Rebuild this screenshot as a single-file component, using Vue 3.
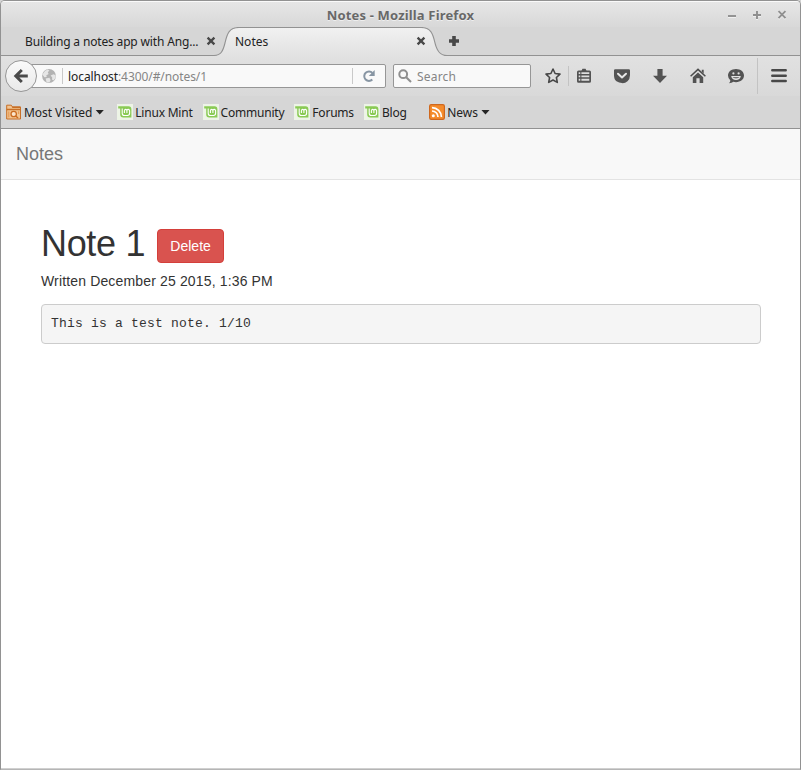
<script setup>
const bookmarks = [
  { label: 'Most Visited', icon: 'folder', menu: true },
  { label: 'Linux Mint', icon: 'mint' },
  { label: 'Community', icon: 'mint' },
  { label: 'Forums', icon: 'mint' },
  { label: 'Blog', icon: 'mint' },
  { label: 'News', icon: 'rss', menu: true },
]
</script>

<template>
  <div class="window">
    <header class="chrome">
      <div class="titlebar">
        <span class="title">Notes - Mozilla Firefox</span>
        <div class="controls">
          <svg viewBox="0 0 10 10"><path d="M1 6H9" /></svg>
          <svg viewBox="0 0 10 10"><path d="M1 5H9M5 1V9" /></svg>
          <svg viewBox="0 0 10 10"><path d="M1.5 1.2L8.5 8.2M8.5 1.2L1.5 8.2" /></svg>
        </div>
      </div>

      <div class="tabs">
        <div class="tab idle">
          <span class="tab-label">Building a notes app with Ang...</span>
          <svg class="close" viewBox="0 0 10 10"><path d="M1.6 1.6L8.4 8.4M8.4 1.6L1.6 8.4" /></svg>
        </div>
        <div class="tab active">
          <svg class="tab-shape" viewBox="0 0 238 30">
            <defs>
              <linearGradient id="tabfill" x1="0" y1="0" x2="0" y2="1">
                <stop offset="0" stop-color="#f1f1f1" />
                <stop offset="1" stop-color="#e1e1e1" />
              </linearGradient>
            </defs>
            <path d="M0 28.5H3C10 28.5 12 24 14 16C16 7 18 .5 28 .5H210C220 .5 222 7 224 16C226 24 229 28.5 236 28.5H238V30H0Z" fill="url(#tabfill)" />
            <path d="M0 28.5H3C10 28.5 12 24 14 16C16 7 18 .5 28 .5H210C220 .5 222 7 224 16C226 24 229 28.5 236 28.5H238" fill="none" stroke="#929292" stroke-width="1.1" />
          </svg>
          <span class="tab-label">Notes</span>
          <svg class="close" viewBox="0 0 10 10"><path d="M1.6 1.6L8.4 8.4M8.4 1.6L1.6 8.4" /></svg>
        </div>
        <svg class="plus" viewBox="0 0 12 12"><path d="M4.2 1H7.8V4.2H11V7.8H7.8V11H4.2V7.8H1V4.2H4.2Z" /></svg>
      </div>

      <div class="navbar-row">
        <div class="back">
          <svg viewBox="0 0 16 16"><path d="M8.8 2L2.8 8L8.8 14M3.6 8H14.8" fill="none" stroke="#4a4a4a" stroke-width="3" /></svg>
        </div>
        <div class="url">
          <svg class="globe" viewBox="0 0 16 16">
            <circle cx="8" cy="8" r="6.9" fill="#b3b3b3" />
            <path d="M1.4 6.4L4 3L6.6 1.6L8.4 2.4L6.8 4.2L7.6 6L5.2 7.6L5.8 9L3.4 9.2ZM9.6 7.6L12.6 6.2L14.8 7.4L14.4 10L12.4 12.6L11 11.4L11.2 9.4ZM4.6 10.6L8.4 9.8L9.6 12L8.4 14.6L5.6 14.2Z" fill="#e6e6e6" />
          </svg>
          <i class="sep"></i>
          <span class="address"><b>localhost</b>:4300/#/notes/1</span>
          <i class="sep"></i>
          <svg class="reload" viewBox="0 0 14 14">
            <path d="M10.3 10.5A4.7 4.7 0 1 1 10.4 4" fill="none" stroke="#8795a3" stroke-width="2" />
            <path d="M12.7 1V7H6.8Z" fill="#8795a3" />
          </svg>
        </div>
        <div class="search">
          <svg viewBox="0 0 14 14"><circle cx="5.2" cy="5.2" r="3.9" /><path d="M8.2 8.2L13 13" /></svg>
          <span>Search</span>
        </div>
        <div class="tools">
          <svg viewBox="0 0 18 18"><path d="M9 2L11.1 6.5L16 7.1L12.4 10.5L13.3 15.4L9 13L4.7 15.4L5.6 10.5L2 7.1L6.9 6.5Z" fill="none" stroke="#484848" stroke-width="1.6" stroke-linejoin="round" /></svg>
          <i class="divider short"></i>
          <svg viewBox="0 0 18 18">
            <path fill-rule="evenodd" d="M3.5 3.5H6.5L7.5 1.8H10.5L11.5 3.5H14.5Q16 3.5 16 5V14.2Q16 15.7 14.5 15.7H3.5Q2 15.7 2 14.2V5Q2 3.5 3.5 3.5ZM3.7 5.3V7.1H5.3V5.3ZM6.4 5.3V7.1H14.3V5.3ZM3.7 8.5V10.3H5.3V8.5ZM6.4 8.5V10.3H14.3V8.5ZM3.7 11.8V13.8H5.3V11.8ZM6.4 11.8V13.8H14.3V11.8Z" />
          </svg>
          <svg viewBox="0 0 18 18">
            <path d="M2.2 2.3H15.8Q17 2.3 17 3.5V8.2Q17 12 14.5 14.2T9 16.1T3.5 14.2T1 8.2V3.5Q1 2.3 2.2 2.3Z" />
            <path d="M5 6.8L9 10.5L13 6.8" fill="none" stroke="#e7e7e7" stroke-width="2" stroke-linecap="round" stroke-linejoin="round" />
          </svg>
          <svg viewBox="0 0 18 18"><path d="M6.4 2H11.6V8.7H16L9 16L2 8.7H6.4Z" /></svg>
          <svg viewBox="0 0 18 18">
            <path d="M1.6 9.3L9 2.4L16.4 9.3" fill="none" stroke="#4d4d4d" stroke-width="1.5" />
            <path d="M12.8 2.8H14.7V6.6L12.8 5ZM3.8 10.2L9 5.4L14.2 10.2V16H10.6V11.2H7.4V16H3.8Z" />
          </svg>
          <svg viewBox="0 0 18 18">
            <path d="M9 2C13.6 2 17 4.8 17 8.6S13.6 15.2 9 15.2Q7.6 15.2 6.4 14.8Q4.8 16.2 2 16.2Q3.5 14.8 3.3 13.2Q1 11.4 1 8.6C1 4.8 4.4 2 9 2Z" />
            <path d="M4.2 9H13.8Q13.1 13 9 13T4.2 9Z" fill="#e5e5e5" />
            <path d="M5.4 10H12.6Q11.7 11.4 9 11.4T5.4 10Z" fill="#777" />
            <circle cx="6.4" cy="6.4" r="1.1" fill="#dedede" /><circle cx="11.6" cy="6.4" r="1.1" fill="#dedede" />
          </svg>
          <i class="divider tall"></i>
          <svg viewBox="0 0 18 18"><path d="M2.3 3.3H15.7M2.3 8.7H15.7M2.3 14.1H15.7" fill="none" stroke="#484848" stroke-width="2.5" stroke-linecap="round" /></svg>
        </div>
      </div>

      <nav class="bookmarks">
        <a v-for="b in bookmarks" :key="b.label" class="bookmark" :class="b.icon">
          <svg v-if="b.icon === 'folder'" viewBox="0 0 16 16">
            <path d="M.7 15V1.2H5.3L6.5 3H14.5V15Z" fill="#f2c491" stroke="#c86f26" />
            <path d="M.7 5.4H14.5M6.2 3.2H14.5" fill="none" stroke="#c86f26" stroke-width="1.5" />
            <circle cx="7.7" cy="10" r="2.7" fill="#fbe5cc" stroke="#ca6b20" stroke-width="1.3" />
            <path d="M9.7 12L12 14" stroke="#ca6b20" stroke-width="1.5" />
            <path d="M2.8 7.4V13.4M12.7 7.2V10" stroke="#e4954b" stroke-width="1" />
          </svg>
          <svg v-else-if="b.icon === 'mint'" viewBox="0 0 16 16">
            <rect width="16" height="16" fill="#edf4e6" />
            <path d="M1.2 2.2H11.5Q14.4 2.2 14.4 5.2V13.6H6.3Q3.2 13.6 3.2 10.6V4.5H1.2Z" fill="#8aca55" />
            <path d="M5.2 4.4V9.2Q5.2 11.5 7.5 11.5H10.4Q12.6 11.5 12.6 9.3V6.9Q12.6 5.4 11.2 5.4T9.9 7V9.1M9.9 7Q9.9 5.4 8.7 5.4T7.4 7V9.1" fill="none" stroke="#fff" stroke-width="1.1" />
          </svg>
          <svg v-else viewBox="0 0 16 16">
            <rect x=".6" y=".6" width="14.8" height="14.8" rx="1.6" fill="#f58c2c" stroke="#cf681e" stroke-width="1.2" />
            <circle cx="4.3" cy="11.7" r="1.5" fill="#fff" />
            <path d="M3 7A6 6 0 0 1 9 13M3 3.6A9.4 9.4 0 0 1 12.4 13" fill="none" stroke="#fff" stroke-width="1.7" />
          </svg>
          <span>{{ b.label }}</span>
          <i v-if="b.menu" class="caret"></i>
        </a>
      </nav>
    </header>

    <main class="page">
      <div class="app-bar"><span class="brand">Notes</span></div>
      <section class="note">
        <div class="heading">
          <h1>Note 1</h1>
          <button>Delete</button>
        </div>
        <p>Written December 25 2015, 1:36 PM</p>
        <pre>This is a test note. 1/10</pre>
      </section>
    </main>
  </div>
</template>

<style>
body {
  background: #d4d4d4;
}
</style>

<style scoped>
* {
  box-sizing: border-box;
}
svg {
  display: block;
  flex: none;
}
.window {
  display: flex;
  flex-direction: column;
  width: 801px;
  height: 770px;
  border: 1px solid #929292;
  border-bottom: 1px solid #b5b5b5;
  border-radius: 5px 5px 0 0;
  overflow: hidden;
  background: #fff;
}
.chrome {
  height: 128px;
  border-bottom: 1px solid #929292;
  background: #d6d6d6;
  font-family: "Noto Sans", sans-serif;
  font-size: 12px;
  color: #222;
}
.titlebar {
  display: grid;
  grid-template-columns: 1fr auto 1fr;
  align-items: center;
  height: 26px;
  padding-top: 1px;
  border-top: 1px solid #fafafa;
  background: linear-gradient(#e6e6e6, #d8d8d8);
}
.title {
  grid-column: 2;
  font-size: 13px;
  font-weight: 700;
  letter-spacing: 0.16px;
  color: #686868;
  text-shadow: 0 1px #efefef;
  white-space: nowrap;
}
.controls {
  display: flex;
  justify-content: flex-end;
  gap: 15px;
  padding-right: 13px;
}
.controls svg {
  width: 10px;
  height: 10px;
  fill: none;
  stroke: #8f8f8f;
  stroke-width: 1.9;
  filter: drop-shadow(0 1px 0 #f0f0f0);
}
.tabs {
  display: flex;
  align-items: center;
  height: 29px;
  border-bottom: 1px solid #929292;
}
.tab {
  display: flex;
  align-items: center;
  height: 29px;
  position: relative;
}
.idle {
  width: 212px;
  padding-left: 24px;
}
.active {
  width: 234px;
  padding-left: 22px;
}
.tab-shape {
  position: absolute;
  left: -2px;
  top: 0;
  width: 238px;
  height: 30px;
}
.tab-label {
  position: relative;
  flex: 1;
  min-width: 0;
  white-space: nowrap;
}
.idle .tab-label {
  letter-spacing: -0.16px;
}
.close {
  position: relative;
  width: 10px;
  height: 10px;
  fill: none;
  stroke: #484848;
  stroke-width: 2.3;
}
.idle .close {
  margin-right: -3px;
}
.active .close {
  margin-right: 21px;
}
.plus {
  width: 12px;
  height: 12px;
  margin-left: 1px;
  fill: #484848;
}
.navbar-row {
  display: flex;
  align-items: center;
  height: 40px;
  padding-left: 4px;
  background: linear-gradient(#e1e1e1, #d9d9d9);
}
.back {
  display: grid;
  flex: none;
  place-items: center;
  width: 32px;
  height: 32px;
  margin-right: -16px;
  border: 1px solid #969696;
  border-radius: 50%;
  background: linear-gradient(#fafafa, #e9e9e9);
  position: relative;
}
.back svg {
  width: 16px;
  height: 16px;
}
.url,
.search {
  display: flex;
  flex: none;
  align-items: center;
  height: 24px;
  border: 1px solid #969696;
  border-radius: 2px;
  background: #f9f9f9;
}
.url {
  width: 365px;
  padding-left: 19px;
}
.globe {
  width: 16px;
  height: 16px;
}
.sep {
  width: 1px;
  height: 16px;
  background: #c9c9c9;
}
.globe + .sep {
  margin: 0 5px;
}
.address {
  flex: 1;
  letter-spacing: -0.08px;
  color: #858585;
  white-space: nowrap;
}
.address b {
  font-weight: 400;
  color: #222;
}
.reload {
  width: 14px;
  height: 14px;
  margin: 0 9px;
}
.search {
  width: 138px;
  margin-left: 7px;
  padding-left: 4px;
  gap: 5px;
  color: #858585;
  letter-spacing: 0.2px;
}
.search svg {
  width: 14px;
  height: 14px;
  fill: none;
  stroke: #8f8f8f;
  stroke-width: 2;
}
.tools {
  display: flex;
  flex: none;
  align-items: center;
  margin-left: 13px;
}
.tools svg {
  width: 18px;
  height: 18px;
  margin-right: 20px;
  fill: #535353;
}
.tools svg:first-child {
  margin-right: 6px;
}
.tools svg:last-child {
  margin-right: 0;
}
.divider {
  width: 1px;
  background: #c3c3c3;
}
.short {
  height: 20px;
  margin-right: 6px;
}
.tall {
  height: 36px;
  margin-left: -8px;
  margin-right: 12px;
}
.bookmarks {
  display: flex;
  align-items: center;
  height: 32px;
  padding-left: 5px;
}
.bookmark {
  display: flex;
  align-items: center;
  gap: 2px;
  white-space: nowrap;
}
.bookmark svg {
  width: 16px;
  height: 16px;
}
.mint {
  margin-left: 10px;
  letter-spacing: -0.21px;
}
.folder {
  letter-spacing: -0.06px;
}
.folder + .mint {
  margin-left: 13px;
}
.rss {
  margin-left: 22.5px;
}
.caret {
  width: 9px;
  height: 5px;
  margin-left: 1px;
  background: #252525;
  clip-path: polygon(0 0, 100% 0, 50% 100%);
}
.page {
  flex: 1;
  border-bottom: 1px solid #d0d0d0;
  font-family: "Liberation Sans", Arial, sans-serif;
  font-size: 14px;
  line-height: 20px;
  color: #333;
}
.app-bar {
  height: 51px;
  padding: 15px;
  border-bottom: 1px solid #e3e3e3;
  background: #f8f8f8;
}
.brand {
  display: block;
  font-size: 18px;
  color: #777;
}
.note {
  padding: 40px 39px 40px 40px;
}
.heading {
  display: flex;
  align-items: center;
  gap: 12px;
  height: 44px;
  margin-bottom: 7px;
}
h1 {
  margin: 4px 0 0;
  font-size: 36px;
  line-height: 40px;
  font-weight: 400;
  letter-spacing: -0.33px;
  white-space: nowrap;
}
button {
  width: 67px;
  height: 34px;
  margin-top: 8px;
  padding: 0;
  border: 1px solid #d43f3a;
  border-radius: 4px;
  background: #d9534f;
  color: #fff;
  font: 14px "Liberation Sans", Arial, sans-serif;
}
p {
  margin: 0 0 13px;
  letter-spacing: 0.15px;
}
pre {
  height: 40px;
  margin: 0;
  padding: 9px;
  border: 1px solid #ccc;
  border-radius: 4px;
  background: #f5f5f5;
  font: 13px/19px "Liberation Mono", monospace;
  letter-spacing: 0.2px;
}
</style>
